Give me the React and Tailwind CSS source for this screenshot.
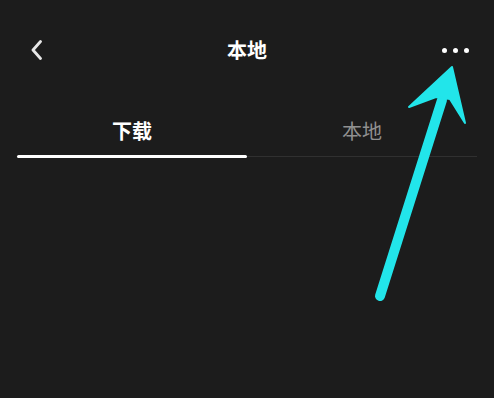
import { useState } from "react";

const tabs = ["下载", "本地"];

const App = () => {
  const [active, setActive] = useState(0);

  return (
    <div
      className="relative w-[494px] h-[398px] overflow-hidden bg-[#1c1c1c] text-white"
      style={{ fontFamily: '"Noto Sans CJK SC", "Noto Sans", sans-serif' }}
    >
      {/* header */}
      <div className="mt-[28px] h-[44px] flex items-center px-[17px]">
        <div className="w-[80px] flex items-center">
          <button className="ml-[14px] flex items-center">
            <svg width="12" height="20" viewBox="0 0 12 20" fill="none">
              <path
                d="M9.5 1.5 L2 10 L9.5 18.5"
                stroke="#e6e6e6"
                strokeWidth="2.8"
                strokeLinecap="round"
                strokeLinejoin="round"
              />
            </svg>
          </button>
        </div>
        <div className="flex-1 text-center text-[20px] font-bold leading-none">本地</div>
        <div className="w-[80px] flex items-center justify-end pr-[8px] gap-[6px]">
          <span className="w-[5px] h-[5px] rounded-full bg-white" />
          <span className="w-[5px] h-[5px] rounded-full bg-white" />
          <span className="w-[5px] h-[5px] rounded-full bg-white" />
        </div>
      </div>

      {/* tabs */}
      <div className="mt-[40px] px-[17px] flex">
        {tabs.map((t, i) => (
          <button key={t} onClick={() => setActive(i)} className="flex-1 flex flex-col">
            <span
              className={
                "h-[43px] pb-[5px] flex items-center justify-center text-[20px] " +
                (i === active ? "font-bold text-white" : "text-[#909090]")
              }
            >
              {t}
            </span>
            {i === active ? (
              <span className="h-[3px] bg-white rounded-full" />
            ) : (
              <span className="h-[3px] flex items-center">
                <span className="h-px w-full bg-[#303030]" />
              </span>
            )}
          </button>
        ))}
      </div>

      {/* annotation arrow */}
      <svg
        className="absolute inset-0 pointer-events-none"
        width="494"
        height="398"
        viewBox="0 0 494 398"
      >
        <line
          x1="380"
          y1="296"
          x2="442"
          y2="100"
          stroke="#22e5ea"
          strokeWidth="10"
          strokeLinecap="round"
        />
        <polygon
          points="452,67 465,123 450,99 436,97 409,107"
          fill="#22e5ea"
          stroke="#22e5ea"
          strokeWidth="2"
          strokeLinejoin="round"
        />
      </svg>
    </div>
  );
};

export default App;
